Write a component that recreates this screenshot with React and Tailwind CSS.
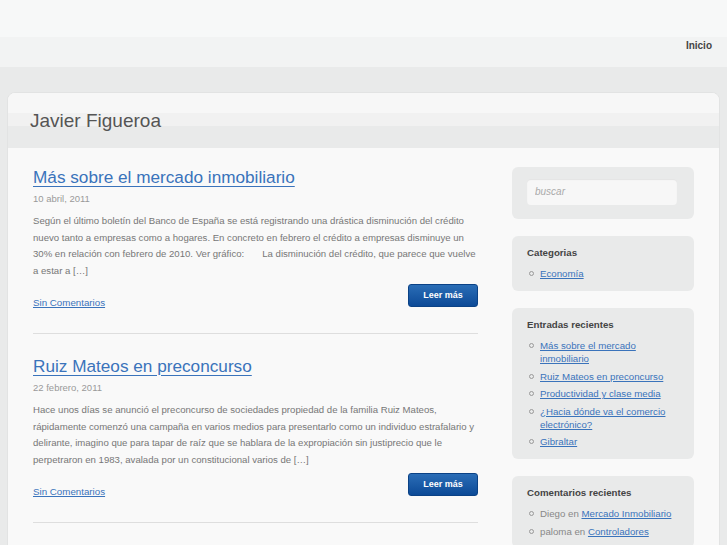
import React from 'react';

const posts = [
  {
    title: 'Más sobre el mercado inmobiliario',
    date: '10 abril, 2011',
    lines: [
      'Según el último boletín del Banco de España se está registrando una drástica disminución del crédito',
      'nuevo tanto a empresas como a hogares. En concreto en febrero el crédito a empresas disminuye un',
      ['30% en relación con febrero de 2010. Ver gráfico:', 'La disminución del crédito, que parece que vuelve'],
      'a estar a […]',
    ],
  },
  {
    title: 'Ruiz Mateos en preconcurso',
    date: '22 febrero, 2011',
    lines: [
      'Hace unos días se anunció el preconcurso de sociedades propiedad de la familia Ruiz Mateos,',
      'rápidamente comenzó una campaña en varios medios para presentarlo como un individuo estrafalario y',
      'delirante, imagino que para tapar de raíz que se hablara de la expropiación sin justiprecio que le',
      'perpetraron en 1983, avalada por un constitucional varios de […]',
    ],
  },
];

const recent = [
  'Más sobre el mercado inmobiliario',
  'Ruiz Mateos en preconcurso',
  'Productividad y clase media',
  '¿Hacia dónde va el comercio electrónico?',
  'Gibraltar',
];

const Widget = ({ title, children }) => (
  <div className="rounded-[6px] bg-[#e9eaea] px-[15px] pb-[10.5px] pt-[9px]">
    <h3 className="text-[9.7px] font-bold leading-[16px] text-[#444]">{title}</h3>
    <ul className="mt-[6.5px] space-y-[4.5px]">{children}</ul>
  </div>
);

const Item = ({ children }) => (
  <li className="flex gap-[6px] pl-[2px] text-[9.7px] leading-[13px]">
    <span className="mt-[4px] h-[5px] w-[5px] shrink-0 rounded-full border border-[#999]" />
    <span>{children}</span>
  </li>
);

export default function App() {
  return (
    <div className="min-h-[545px] bg-[#e9eaea] font-['Liberation_Sans',Arial,sans-serif]">
      <div className="h-[37px] bg-[#f7f8f8]" />
      <div className="flex h-[30px] items-start justify-end bg-[#f2f3f3] pr-[15px] pt-[2px]">
        <a className="text-[10px] font-bold leading-[13px] text-[#444]">Inicio</a>
      </div>

      <div className="px-[7px] pt-[25px]">
        <div className="overflow-hidden rounded-t-[8px] border border-[#e2e3e3] bg-[#f9f9f9]">
          <div className="flex h-[55px] flex-col">
            <div className="h-[20px] bg-[#f7f7f7]" />
            <div className="h-[13px] bg-[#f1f1f1]" />
            <div className="h-[22px] bg-[#e9eaea]" />
          </div>
          <div className="-mt-[55px] flex h-[55px] items-center pl-[22px]">
            <h1 className="text-[19px] leading-[22px] text-[#555]">Javier Figueroa</h1>
          </div>

          <div className="flex gap-[34px] pl-[25px] pr-[25px]">
            <main className="w-[445px] pt-[18px]">
              {posts.map((post, i) => (
                <article
                  key={post.title}
                  className={`border-b border-[#dedede] pb-[24px] ${i > 0 ? 'mt-[21px]' : ''}`}
                >
                  <h2 className="text-[17.2px] leading-[22px] text-[#3a73bb]">
                    <a className="underline decoration-1 underline-offset-[3px]">{post.title}</a>
                  </h2>
                  <p className="mt-[5px] text-[9.5px] leading-[12px] text-[#999]">{post.date}</p>
                  <p className="mt-[8px] text-[9.6px] leading-[16.5px] text-[#777]">
                    {post.lines.map((line, j) => (
                      <span key={j} className="block whitespace-nowrap">
                        {Array.isArray(line) ? (
                          <>
                            {line[0]}
                            <span className="inline-block w-[18px]" />
                            {line[1]}
                          </>
                        ) : (
                          line
                        )}
                      </span>
                    ))}
                  </p>
                  <div className="mt-[5px] flex items-start justify-between">
                    <a className="mt-[13px] text-[9.75px] leading-[12px] text-[#3a73bb] underline">
                      Sin Comentarios
                    </a>
                    <button className="h-[23px] w-[70px] rounded-[3px] border border-[#0b4286] bg-gradient-to-b from-[#2a6db6] to-[#0c4a97] text-[9px] font-bold text-white">
                      Leer más
                    </button>
                  </div>
                </article>
              ))}
            </main>

            <aside className="w-[182px] space-y-[17px] pt-[19px]">
              <div className="rounded-[6px] bg-[#e9eaea] px-[15px] pb-[14px] pt-[11px]">
                <input
                  className="h-[26px] w-[150px] rounded-[4px] bg-[#f7f7f7] px-[8px] text-[10px] italic text-[#999] shadow-[inset_0_1px_1px_rgba(0,0,0,0.08)] outline-none placeholder:text-[#aaa]"
                  placeholder="buscar"
                />
              </div>
              <Widget title="Categorias">
                <Item><a className="text-[#3a73bb] underline">Economía</a></Item>
              </Widget>
              <Widget title="Entradas recientes">
                {recent.map((r) => (
                  <Item key={r}><a className="text-[#3a73bb] underline">{r}</a></Item>
                ))}
              </Widget>
              <Widget title="Comentarios recientes">
                <Item>
                  <span className="text-[#888]">Diego en </span>
                  <a className="text-[#3a73bb] underline">Mercado Inmobiliario</a>
                </Item>
                <Item>
                  <span className="text-[#888]">paloma en </span>
                  <a className="text-[#3a73bb] underline">Controladores</a>
                </Item>
              </Widget>
            </aside>
          </div>
        </div>
      </div>
    </div>
  );
}
